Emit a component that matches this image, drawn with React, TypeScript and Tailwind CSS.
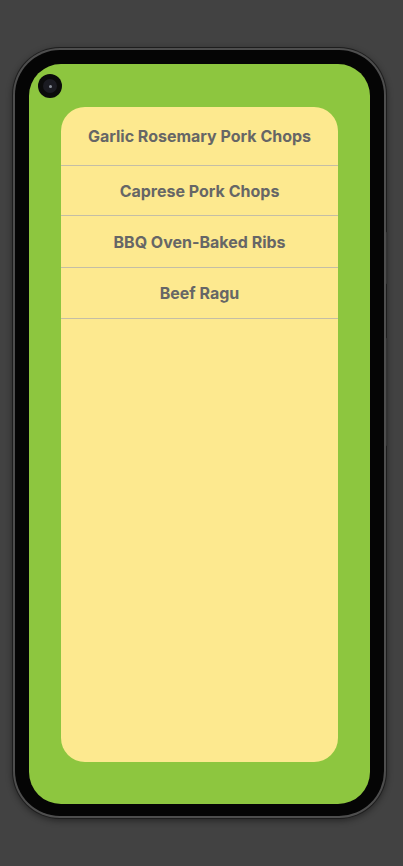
const RECIPES = [
  { name: "Garlic Rosemary Pork Chops", h: "h-[59px]" },
  { name: "Caprese Pork Chops", h: "h-[50px]" },
  { name: "BBQ Oven-Baked Ribs", h: "h-[52px]" },
  { name: "Beef Ragu", h: "h-[51px]" },
];

function Camera() {
  return (
    <div className="absolute left-[9px] top-[10px] w-[24px] h-[24px] rounded-full bg-[#0b0b0b] flex items-center justify-center">
      <div className="w-[14px] h-[14px] rounded-full bg-[#1b1b22] flex items-center justify-center">
        <div className="w-[3px] h-[3px] rounded-full bg-[#8a8f99]" />
      </div>
    </div>
  );
}

export default function App() {
  return (
    <div className="relative w-[403px] h-[866px] bg-[#424242] overflow-hidden" style={{ fontFamily: "Inter, 'Liberation Sans', sans-serif" }}>
      {/* side buttons */}
      <div className="absolute left-[386px] top-[232px] w-[2px] h-[52px] rounded-r-[2px] bg-[#333]" />
      <div className="absolute left-[386px] top-[338px] w-[2px] h-[108px] rounded-r-[2px] bg-[#333]" />

      <div className="pt-[47px] pl-[12px]">
        <div className="w-[375px] h-[772px] rounded-[48px] bg-[#1e1e1e] p-[1px] shadow-[0_2px_6px_rgba(0,0,0,0.4)]">
          <div className="w-full h-full rounded-[47px] bg-[#4e4e4e] p-[2px]">
            <div className="w-full h-full rounded-[45px] bg-[#050505] px-[14px] pt-[14px] pb-[12px]">
              <div className="relative w-full h-full rounded-[32px] bg-[#8dc63f] px-[32px] pt-[43px] pb-[42px]">
                <Camera />
                <div className="w-full h-full rounded-[24px] bg-[#fde98f] overflow-hidden">
                  {RECIPES.map((r) => (
                    <div
                      key={r.name}
                      className={`${r.h} flex items-center justify-center border-b border-[#c4bea6]`}
                    >
                      <span className="text-[16px] font-bold text-[#666666]">
                        {r.name}
                      </span>
                    </div>
                  ))}
                </div>
              </div>
            </div>
          </div>
        </div>
      </div>
    </div>
  );
}
